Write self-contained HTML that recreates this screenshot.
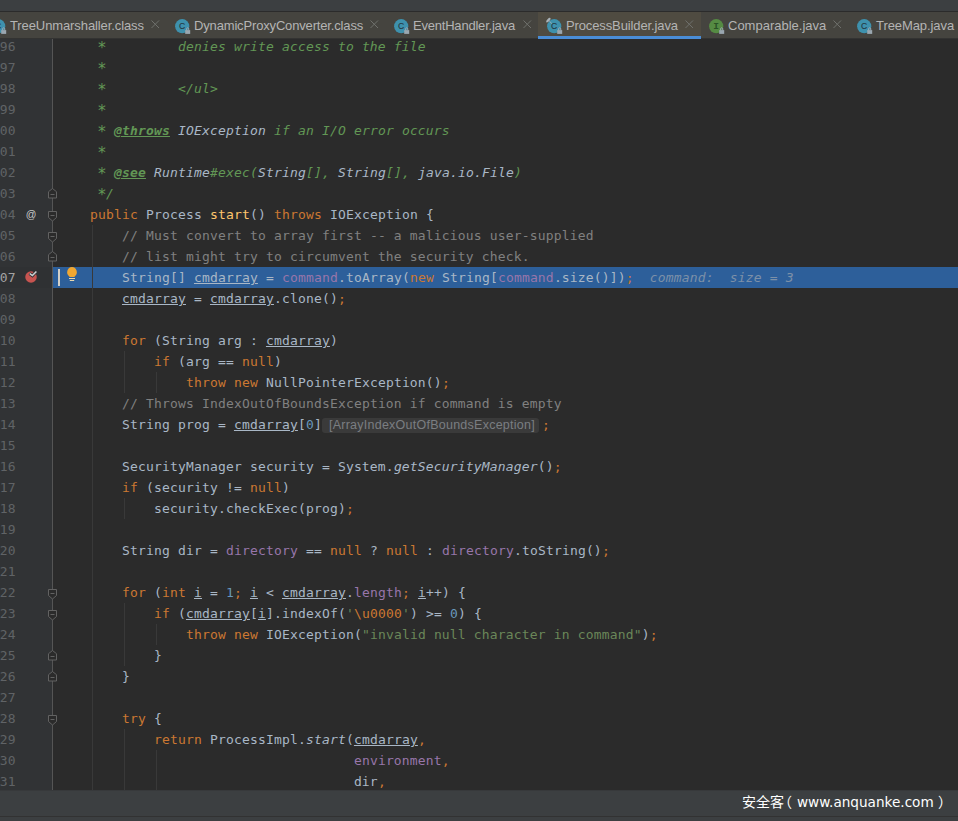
<!DOCTYPE html>
<html><head><meta charset="utf-8"><title>ProcessBuilder.java</title>
<style>
html,body{margin:0;padding:0;}
body{width:958px;height:821px;overflow:hidden;background:#2b2b2b;position:relative;font-family:"Liberation Sans","Noto Sans CJK SC",sans-serif;}
#top{position:absolute;left:0;top:0;width:958px;height:11px;background:#3c3f41;}
#topline{position:absolute;left:0;top:11px;width:958px;height:1px;background:#2b2b2b;}
#tabs{z-index:2;position:absolute;left:0;top:12px;width:958px;height:27px;background:linear-gradient(#45443f 0,#45443f 26px,#333332 26px);overflow:hidden;}
.tab{position:absolute;top:0;height:27px;font-size:13px;line-height:28px;color:#b4b4b4;white-space:nowrap;}
.tab.active{background:#4f4b41;}
.tab.active:after{content:"";position:absolute;left:0;right:0;bottom:0;height:3px;background:#4a8dd6;}
.tt{position:absolute;top:0;}
.cx{position:absolute;top:8px;}
.ic{position:absolute;top:7px;overflow:visible;}
#ed{position:absolute;left:0;top:38px;width:958px;height:752px;overflow:hidden;background:#2b2b2b;}
#gut{position:absolute;left:0;top:0;width:52px;height:752px;background:#313335;}
#gline{position:absolute;left:52px;top:0;width:1px;height:752px;background:#555555;}
#code{position:absolute;left:0;top:-2px;width:958px;}
.l{position:absolute;left:58px;height:21px;line-height:21px;white-space:pre;font-family:"DejaVu Sans Mono","Liberation Mono",monospace;font-size:13px;letter-spacing:0.17px;color:#a9b7c6;}
.n{position:absolute;left:-16.3px;width:32px;text-align:right;height:21px;line-height:21px;white-space:pre;font-family:"DejaVu Sans Mono","Liberation Mono",monospace;font-size:13px;letter-spacing:0.17px;color:#606366;}
.k{color:#cc7832}.c{color:#808080}.d{color:#629755;font-style:italic}.dt{color:#629755;font-style:italic;font-weight:bold;text-decoration:underline}
.di{color:#a9b7c6;font-style:italic}
.a{display:inline-block;width:8px;height:21px;vertical-align:top;font-size:15.5px;line-height:21px;text-indent:-0.7px;position:relative;top:1.6px;letter-spacing:0;overflow:visible}
.s{color:#6a8759}.nu{color:#6897bb}.f{color:#9876aa}.m{color:#ffc66d}.i{font-style:italic}.u{text-decoration:underline}
#nums{position:absolute;left:0;top:-2px;}
.iv{color:#7c90a8;font-style:italic}
.inl{display:inline-block;vertical-align:top;margin:4px 0 0 0;height:15px;line-height:14px;width:217px;box-sizing:border-box;padding-left:7px;background:#3a3a3a;border-radius:3px;color:#7a7e82;font-family:"Liberation Sans",sans-serif;font-size:12.5px;letter-spacing:0.25px;font-style:normal}
.sc{margin-left:3px}
#gic{position:absolute;left:0;top:-2px;}
#crow{position:absolute;left:0;top:231px;width:52px;height:21px;background:#2f3133;}
.fm{position:absolute;left:48px;}
#at{position:absolute;left:24px;top:168px;width:14px;text-align:center;height:21px;line-height:20px;font-family:"Liberation Sans",sans-serif;font-size:10.5px;color:#c8c8c8;}
#bp{position:absolute;left:25px;top:233px;overflow:visible;}
#caret{position:absolute;left:58px;top:233px;width:2px;height:17px;background:#d2cfc8;}
#bulb{position:absolute;left:66px;top:231px;}
.g{position:absolute;width:1px;background:#393939;}
#bot{position:absolute;left:0;top:790px;width:958px;height:31px;background:#3c3f41;box-sizing:border-box;border-top:1px solid #37393b;}
#botline{position:absolute;left:0;top:816px;width:958px;height:1px;background:#323232;}
#wm{position:absolute;left:0;top:790px;width:958px;height:27px;color:#ffffff;white-space:nowrap;}
#wm span{position:absolute;top:0;height:27px;line-height:25px;}
.wc{font-family:"Liberation Sans","Noto Sans CJK SC",sans-serif;font-size:14px;}
.wl{font-family:"DejaVu Sans","Liberation Sans",sans-serif;font-size:13.6px;}
</style></head><body>
<div id="top"></div><div id="topline"></div>
<div id="tabs">
<svg width="0" height="0" style="position:absolute"><defs>
<g id="lock"><rect x="0" y="3.2" width="5" height="3.8" fill="#9aa7b0"/><path d="M1.45 3.4V1.9a1.05 1.05 0 0 1 2.1 0V3.4" fill="none" stroke="#9aa7b0" stroke-width="1"/></g>
<g id="icc"><circle cx="7.2" cy="7.2" r="7.1" fill="#3e91ad"/><text x="7" y="10.4" text-anchor="middle" font-family="Liberation Sans,sans-serif" font-size="8.6" fill="#23353d" stroke="#23353d" stroke-width="0.12">C</text><use href="#lock" x="10.2" y="7.9"/></g>
<g id="ici"><circle cx="7.2" cy="7.2" r="7.1" fill="#558b43"/><text x="7.2" y="9.7" text-anchor="middle" font-family="Liberation Mono,monospace" font-size="9.5" font-weight="bold" fill="#2a5226">I</text><use href="#lock" x="10.2" y="7.9"/></g>
<g id="cx"><path d="M0.5 0.5L8 8M8 0.5L0.5 8" stroke="#6f706c" stroke-width="1" fill="none"/></g>
<g id="fs"><path d="M0.5 0.5H8.5V6.5L4.5 10L0.5 6.5Z" fill="#2b2b2b" stroke="#626262" stroke-width="1"/><path d="M2.5 4.5H6.5" stroke="#626262" stroke-width="1"/></g>
<g id="fe"><path d="M0.5 10H8.5V3.7L4.5 0.5L0.5 3.7Z" fill="#2b2b2b" stroke="#626262" stroke-width="1"/><path d="M2.5 6.5H6.5" stroke="#626262" stroke-width="1"/></g>
</defs></svg>
<div class="tab" style="left:-12px;width:180px"><svg class="ic" style="left:3px" width="16" height="16" viewBox="0 0 16 16"><use href="#icc"/></svg><span class="tt" style="left:22px;letter-spacing:-0.1px">TreeUnmarshaller.class</span><svg class="cx" style="left:163px" width="9" height="9"><use href="#cx"/></svg></div>
<div class="tab" style="left:168px;width:220px"><svg class="ic" style="left:7px" width="16" height="16" viewBox="0 0 16 16"><use href="#icc"/></svg><span class="tt" style="left:26px;letter-spacing:-0.16px">DynamicProxyConverter.class</span><svg class="cx" style="left:202px" width="9" height="9"><use href="#cx"/></svg></div>
<div class="tab" style="left:387px;width:151px"><svg class="ic" style="left:7px" width="16" height="16" viewBox="0 0 16 16"><use href="#icc"/></svg><span class="tt" style="left:26px;letter-spacing:-0.21px">EventHandler.java</span><svg class="cx" style="left:135.5px" width="9" height="9"><use href="#cx"/></svg></div>
<div class="tab active" style="left:538px;width:163px"><svg class="ic" style="left:9px" width="16" height="16" viewBox="0 0 16 16"><use href="#icc"/><ellipse cx="1.4" cy="1.1" rx="2.9" ry="1.25" transform="rotate(-45 1.4 1.1)" fill="#a9b2b8"/><path d="M2.4 2.2L4.9 4.6" stroke="#a9b2b8" stroke-width="0.8"/></svg><span class="tt" style="left:28px;letter-spacing:-0.12px">ProcessBuilder.java</span><svg class="cx" style="left:147px" width="9" height="9"><use href="#cx"/></svg></div>
<div class="tab" style="left:701px;width:150px"><svg class="ic" style="left:8px" width="16" height="16" viewBox="0 0 16 16"><use href="#ici"/></svg><span class="tt" style="left:27px">Comparable.java</span><svg class="cx" style="left:132px" width="9" height="9"><use href="#cx"/></svg></div>
<div class="tab" style="left:850px;width:120px"><svg class="ic" style="left:7px" width="16" height="16" viewBox="0 0 16 16"><use href="#icc"/></svg><span class="tt" style="left:26px;letter-spacing:-0.08px">TreeMap.java</span></div>
</div>
<div id="ed">
<div id="gut"></div><div id="gline"></div>
<div id="code">
<div class="hl" style="position:absolute;left:53px;top:231px;width:905px;height:21px;background:#2d5f9a"></div>
<div class="g" style="left:92px;top:189px;height:570px"></div>
<div class="g" style="left:124px;top:315px;height:42px"></div>
<div class="g" style="left:156px;top:336px;height:21px"></div>
<div class="g" style="left:124px;top:462px;height:21px"></div>
<div class="g" style="left:124px;top:567px;height:63px"></div>
<div class="g" style="left:156px;top:588px;height:21px"></div>
<div class="g" style="left:124px;top:693px;height:66px"></div>
<div class="g" style="left:156px;top:714px;height:45px"></div>
<div class="l" style="top:0px"><span class="d">     <span class="a">*</span>         denies write access to the file</span></div>
<div class="l" style="top:21px"><span class="d">     <span class="a">*</span></span></div>
<div class="l" style="top:42px"><span class="d">     <span class="a">*</span>         &lt;/ul&gt;</span></div>
<div class="l" style="top:63px"><span class="d">     <span class="a">*</span></span></div>
<div class="l" style="top:84px"><span class="d">     <span class="a">*</span> </span><span class="dt">@throws</span><span class="d"> </span><span class="di">IOException</span><span class="d"> if an I/O error occurs</span></div>
<div class="l" style="top:105px"><span class="d">     <span class="a">*</span></span></div>
<div class="l" style="top:126px"><span class="d">     <span class="a">*</span> </span><span class="dt">@see</span><span class="d"> </span><span class="di">Runtime</span><span class="d">#exec(</span><span class="di">String</span><span class="d">[], </span><span class="di">String</span><span class="d">[], </span><span class="di">java.io.File</span><span class="d">)</span></div>
<div class="l" style="top:147px"><span class="d">     <span class="a">*</span>/</span></div>
<div class="l" style="top:168px">    <span class="k">public</span> Process <span class="m">start</span>() <span class="k">throws</span> IOException {</div>
<div class="l" style="top:189px">        <span class="c">// Must convert to array first -- a malicious user-supplied</span></div>
<div class="l" style="top:210px">        <span class="c">// list might try to circumvent the security check.</span></div>
<div class="l" style="top:231px">        String[] <span class="u">cmdarray</span> = <span class="f">command</span>.toArray(<span class="k">new</span> String[<span class="f">command</span>.size()])<span class="k">;</span>  <span class="iv">command:  size = 3</span></div>
<div class="l" style="top:252px">        <span class="u">cmdarray</span> = <span class="u">cmdarray</span>.clone()<span class="k">;</span></div>
<div class="l" style="top:294px">        <span class="k">for</span> (String arg : <span class="u">cmdarray</span>)</div>
<div class="l" style="top:315px">            <span class="k">if</span> (arg == <span class="k">null</span>)</div>
<div class="l" style="top:336px">                <span class="k">throw new</span> NullPointerException()<span class="k">;</span></div>
<div class="l" style="top:357px">        <span class="c">// Throws IndexOutOfBoundsException if command is empty</span></div>
<div class="l" style="top:378px">        String prog = <span class="u">cmdarray</span>[<span class="nu">0</span>]<span class="inl">[ArrayIndexOutOfBoundsException]</span><span class="k sc">;</span></div>
<div class="l" style="top:420px">        SecurityManager security = System.<span class="i">getSecurityManager</span>()<span class="k">;</span></div>
<div class="l" style="top:441px">        <span class="k">if</span> (security != <span class="k">null</span>)</div>
<div class="l" style="top:462px">            security.checkExec(prog)<span class="k">;</span></div>
<div class="l" style="top:504px">        String dir = <span class="f">directory</span> == <span class="k">null</span> ? <span class="k">null</span> : <span class="f">directory</span>.toString()<span class="k">;</span></div>
<div class="l" style="top:546px">        <span class="k">for</span> (<span class="k">int</span> <span class="u">i</span> = <span class="nu">1</span><span class="k">;</span> <span class="u">i</span> &lt; <span class="u">cmdarray</span>.<span class="f">length</span><span class="k">;</span> <span class="u">i</span>++) {</div>
<div class="l" style="top:567px">            <span class="k">if</span> (<span class="u">cmdarray</span>[<span class="u">i</span>].indexOf(<span class="s">'</span><span class="k">\u0000</span><span class="s">'</span>) &gt;= <span class="nu">0</span>) {</div>
<div class="l" style="top:588px">                <span class="k">throw new</span> IOException(<span class="s">"invalid null character in command"</span>)<span class="k">;</span></div>
<div class="l" style="top:609px">            }</div>
<div class="l" style="top:630px">        }</div>
<div class="l" style="top:672px">        <span class="k">try</span> {</div>
<div class="l" style="top:693px">            <span class="k">return</span> ProcessImpl.<span class="i">start</span>(<span class="u">cmdarray</span><span class="k">,</span></div>
<div class="l" style="top:714px">                                     <span class="f">environment</span><span class="k">,</span></div>
<div class="l" style="top:735px">                                     dir<span class="k">,</span></div>
</div>
<div id="gic">
<div id="crow"></div>
<svg class="fm" style="top:152px" width="9" height="11"><use href="#fe"/></svg>
<svg class="fm" style="top:175px" width="9" height="11"><use href="#fs"/></svg>
<svg class="fm" style="top:196px" width="9" height="11"><use href="#fs"/></svg>
<svg class="fm" style="top:215px" width="9" height="11"><use href="#fe"/></svg>
<svg class="fm" style="top:553px" width="9" height="11"><use href="#fs"/></svg>
<svg class="fm" style="top:574px" width="9" height="11"><use href="#fs"/></svg>
<svg class="fm" style="top:614px" width="9" height="11"><use href="#fe"/></svg>
<svg class="fm" style="top:635px" width="9" height="11"><use href="#fe"/></svg>
<svg class="fm" style="top:679px" width="9" height="11"><use href="#fs"/></svg>
<div id="at">@</div>
<svg id="bp" width="14" height="14" viewBox="0 0 14 14"><circle cx="6" cy="8" r="5.75" fill="#c75450"/><path d="M4.6 4.4L7.4 6.6L11.6 2.2" fill="none" stroke="#313335" stroke-width="3.2"/><path d="M4.8 4.6L7.4 6.6L11.4 2.4" fill="none" stroke="#ced2d4" stroke-width="1.5"/></svg>
<div id="caret"></div>
<svg id="bulb" width="12" height="16" viewBox="0 0 12 16"><path d="M6 0.1A5.1 5.1 0 0 0 3.4 9.4V10H8.6V9.4A5.1 5.1 0 0 0 6 0.1Z" fill="#f0a732"/><path d="M3 11.5H9M3.8 13.5H8.2" stroke="#e9d8ae" stroke-width="1"/></svg>
</div>
<div id="nums">
<div class="n" style="top:0px">996</div>
<div class="n" style="top:21px">997</div>
<div class="n" style="top:42px">998</div>
<div class="n" style="top:63px">999</div>
<div class="n" style="top:84px">1000</div>
<div class="n" style="top:105px">1001</div>
<div class="n" style="top:126px">1002</div>
<div class="n" style="top:147px">1003</div>
<div class="n" style="top:168px">1004</div>
<div class="n" style="top:189px">1005</div>
<div class="n" style="top:210px">1006</div>
<div class="n" style="top:231px;color:#a4a3a3">1007</div>
<div class="n" style="top:252px">1008</div>
<div class="n" style="top:273px">1009</div>
<div class="n" style="top:294px">1010</div>
<div class="n" style="top:315px">1011</div>
<div class="n" style="top:336px">1012</div>
<div class="n" style="top:357px">1013</div>
<div class="n" style="top:378px">1014</div>
<div class="n" style="top:399px">1015</div>
<div class="n" style="top:420px">1016</div>
<div class="n" style="top:441px">1017</div>
<div class="n" style="top:462px">1018</div>
<div class="n" style="top:483px">1019</div>
<div class="n" style="top:504px">1020</div>
<div class="n" style="top:525px">1021</div>
<div class="n" style="top:546px">1022</div>
<div class="n" style="top:567px">1023</div>
<div class="n" style="top:588px">1024</div>
<div class="n" style="top:609px">1025</div>
<div class="n" style="top:630px">1026</div>
<div class="n" style="top:651px">1027</div>
<div class="n" style="top:672px">1028</div>
<div class="n" style="top:693px">1029</div>
<div class="n" style="top:714px">1030</div>
<div class="n" style="top:735px">1031</div>
</div>
</div>
<div id="bot"></div><div id="botline"></div>
<div id="wm"><span class="wc" style="left:742px">安全客</span><span class="wc" style="left:778px">（</span><span class="wl" style="left:797px">www.anquanke.com</span><span class="wc" style="left:938px">）</span></div>
</body></html>
